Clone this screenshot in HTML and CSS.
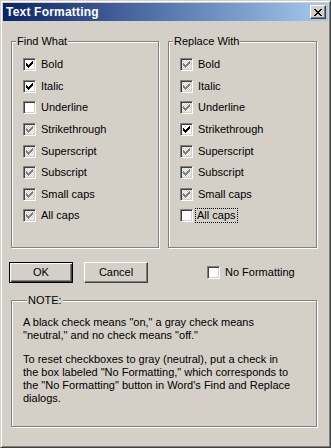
FILE: index.html
```html
<!DOCTYPE html>
<html lang="en">
<head>
  <meta charset="UTF-8">
  <meta name="viewport" content="width=device-width, initial-scale=1.0">
  <title>Text Formatting</title>
  <link rel="stylesheet" href="styles.css">
</head>
<body>
  <div class="dialog">
    <div class="titlebar">
      <span class="title">Text Formatting</span>
      <button class="close-btn" aria-label="Close">
        <svg width="8" height="7" viewBox="0 0 8 7"><path d="M0 0h2v1H0zM6 0h2v1H6zM1 1h2v1H1zM5 1h2v1H5zM2 2h4v1H2zM3 3h2v1H3zM2 4h4v1H2zM1 5h2v1H1zM5 5h2v1H5zM0 6h2v1H0zM6 6h2v1H6z"/></svg>
      </button>
    </div>

    <div class="dialog-body">
      <div class="groups">
        <fieldset class="group">
          <legend>Find What</legend>
          <ul class="options">
            <li class="option"><span class="check on"><svg viewBox="0 0 7 7"><path d="M0 2h1v3H0zM1 3h1v3H1zM2 4h1v3H2zM3 3h1v3H3zM4 2h1v3H4zM5 1h1v3H5zM6 0h1v3H6z"/></svg></span><span class="label">Bold</span></li>
            <li class="option"><span class="check on"><svg viewBox="0 0 7 7"><path d="M0 2h1v3H0zM1 3h1v3H1zM2 4h1v3H2zM3 3h1v3H3zM4 2h1v3H4zM5 1h1v3H5zM6 0h1v3H6z"/></svg></span><span class="label">Italic</span></li>
            <li class="option"><span class="check"></span><span class="label">Underline</span></li>
            <li class="option"><span class="check mixed"><svg viewBox="0 0 7 7"><path d="M0 2h1v3H0zM1 3h1v3H1zM2 4h1v3H2zM3 3h1v3H3zM4 2h1v3H4zM5 1h1v3H5zM6 0h1v3H6z"/></svg></span><span class="label">Strikethrough</span></li>
            <li class="option"><span class="check mixed"><svg viewBox="0 0 7 7"><path d="M0 2h1v3H0zM1 3h1v3H1zM2 4h1v3H2zM3 3h1v3H3zM4 2h1v3H4zM5 1h1v3H5zM6 0h1v3H6z"/></svg></span><span class="label">Superscript</span></li>
            <li class="option"><span class="check mixed"><svg viewBox="0 0 7 7"><path d="M0 2h1v3H0zM1 3h1v3H1zM2 4h1v3H2zM3 3h1v3H3zM4 2h1v3H4zM5 1h1v3H5zM6 0h1v3H6z"/></svg></span><span class="label">Subscript</span></li>
            <li class="option"><span class="check mixed"><svg viewBox="0 0 7 7"><path d="M0 2h1v3H0zM1 3h1v3H1zM2 4h1v3H2zM3 3h1v3H3zM4 2h1v3H4zM5 1h1v3H5zM6 0h1v3H6z"/></svg></span><span class="label">Small caps</span></li>
            <li class="option"><span class="check mixed"><svg viewBox="0 0 7 7"><path d="M0 2h1v3H0zM1 3h1v3H1zM2 4h1v3H2zM3 3h1v3H3zM4 2h1v3H4zM5 1h1v3H5zM6 0h1v3H6z"/></svg></span><span class="label">All caps</span></li>
          </ul>
        </fieldset>

        <fieldset class="group group-right">
          <legend>Replace With</legend>
          <ul class="options">
            <li class="option"><span class="check mixed"><svg viewBox="0 0 7 7"><path d="M0 2h1v3H0zM1 3h1v3H1zM2 4h1v3H2zM3 3h1v3H3zM4 2h1v3H4zM5 1h1v3H5zM6 0h1v3H6z"/></svg></span><span class="label">Bold</span></li>
            <li class="option"><span class="check mixed"><svg viewBox="0 0 7 7"><path d="M0 2h1v3H0zM1 3h1v3H1zM2 4h1v3H2zM3 3h1v3H3zM4 2h1v3H4zM5 1h1v3H5zM6 0h1v3H6z"/></svg></span><span class="label">Italic</span></li>
            <li class="option"><span class="check mixed"><svg viewBox="0 0 7 7"><path d="M0 2h1v3H0zM1 3h1v3H1zM2 4h1v3H2zM3 3h1v3H3zM4 2h1v3H4zM5 1h1v3H5zM6 0h1v3H6z"/></svg></span><span class="label">Underline</span></li>
            <li class="option"><span class="check on"><svg viewBox="0 0 7 7"><path d="M0 2h1v3H0zM1 3h1v3H1zM2 4h1v3H2zM3 3h1v3H3zM4 2h1v3H4zM5 1h1v3H5zM6 0h1v3H6z"/></svg></span><span class="label">Strikethrough</span></li>
            <li class="option"><span class="check mixed"><svg viewBox="0 0 7 7"><path d="M0 2h1v3H0zM1 3h1v3H1zM2 4h1v3H2zM3 3h1v3H3zM4 2h1v3H4zM5 1h1v3H5zM6 0h1v3H6z"/></svg></span><span class="label">Superscript</span></li>
            <li class="option"><span class="check mixed"><svg viewBox="0 0 7 7"><path d="M0 2h1v3H0zM1 3h1v3H1zM2 4h1v3H2zM3 3h1v3H3zM4 2h1v3H4zM5 1h1v3H5zM6 0h1v3H6z"/></svg></span><span class="label">Subscript</span></li>
            <li class="option"><span class="check mixed"><svg viewBox="0 0 7 7"><path d="M0 2h1v3H0zM1 3h1v3H1zM2 4h1v3H2zM3 3h1v3H3zM4 2h1v3H4zM5 1h1v3H5zM6 0h1v3H6z"/></svg></span><span class="label">Small caps</span></li>
            <li class="option"><span class="check"></span><span class="label focused">All caps</span></li>
          </ul>
        </fieldset>
      </div>

      <div class="actions">
        <button class="btn btn-default">OK</button>
        <button class="btn">Cancel</button>
        <div class="option no-format"><span class="check"></span><span class="label">No Formatting</span></div>
      </div>

      <fieldset class="note">
        <legend>NOTE:</legend>
        <p>A black check means "on," a gray check means<br>"neutral," and no check means "off."</p>
        <p>To reset checkboxes to gray (neutral), put a check in<br>the box labeled "No Formatting," which corresponds to<br>the "No Formatting" button in Word's Find and Replace<br>dialogs.</p>
      </fieldset>
    </div>
  </div>
</body>
</html>
```

FILE: styles.css
```css
body {
  margin: 0;
  font-family: "Liberation Sans", Arial, sans-serif;
  font-size: 11px;
  line-height: 13px;
  color: #000;
  background: #d4d0c8;
}

.dialog {
  width: 331px;
  height: 448px;
  box-sizing: border-box;
  background: #d4d0c8;
  border: 1px solid;
  border-color: #d4d0c8 #404040 #404040 #d4d0c8;
  box-shadow: inset 1px 1px #fff, inset -1px -1px #808080;
  padding: 2px;
}

/* title bar */
.titlebar {
  height: 18px;
  display: flex;
  align-items: center;
  justify-content: space-between;
  padding: 0 2px 0 3px;
  background: linear-gradient(to right, #0a246a, #a6caf0);
}

.title {
  color: #fff;
  font-size: 12px;
  font-weight: bold;
  letter-spacing: 0.2px;
}

.close-btn {
  width: 16px;
  height: 14px;
  box-sizing: border-box;
  padding: 0;
  display: flex;
  justify-content: center;
  align-items: center;
  background: #d4d0c8;
  border: 1px solid;
  border-color: #fff #404040 #404040 #fff;
  box-shadow: inset -1px -1px #808080;
}

.close-btn svg {
  display: block;
}

/* body */
.dialog-body {
  padding: 14px 8px 0;
}

.groups {
  display: flex;
  gap: 9px;
}

fieldset {
  margin: 0;
  padding: 0;
  min-width: 0;
  box-sizing: border-box;
  border: 1px solid #808080;
  box-shadow: 1px 1px 0 #fff, inset 1px 1px 0 #fff;
}

legend {
  margin-left: 4px;
  padding: 0 1px;
  background: #d4d0c8;
}

.group {
  width: 148px;
  height: 213px;
}

.group-right {
  width: 149px;
}

.options {
  list-style: none;
  margin: 0;
  padding: 6px 0 0 11px;
}

.option {
  height: 21.6px;
  display: flex;
  align-items: center;
}

/* classic 3d checkbox */
.check {
  width: 13px;
  height: 13px;
  box-sizing: border-box;
  flex-shrink: 0;
  padding: 2px;
  margin-right: 5px;
  background: #fff;
  border: 1px solid;
  border-color: #808080 #fff #fff #808080;
  box-shadow: inset 1px 1px #404040, inset -1px -1px #d4d0c8;
}

.check svg {
  display: block;
  width: 7px;
  height: 7px;
  fill: #000;
  shape-rendering: crispEdges;
}

.check.mixed {
  background: repeating-conic-gradient(#fff 0 25%, #d4d0c8 0 50%) 0 0 / 2px 2px;
}

.check.mixed svg {
  fill: #808080;
}

.label.focused {
  margin-left: -2px;
  padding: 0 1px;
  outline: 1px dotted #000;
}

/* buttons row */
.actions {
  display: flex;
  align-items: center;
  height: 21px;
  margin: 14px 0 0 -2px;
}

.btn {
  width: 64px;
  height: 21px;
  box-sizing: border-box;
  padding: 0;
  margin-right: 11px;
  font: inherit;
  color: #000;
  background: #d4d0c8;
  border: 1px solid;
  border-color: #fff #404040 #404040 #fff;
  box-shadow: inset -1px -1px #808080;
}

.btn-default {
  border: 1px solid #000;
  box-shadow: inset 1px 1px #fff, inset -1px -1px #404040, inset -2px -2px #808080;
}

.no-format {
  margin-left: 48px;
}

/* note */
.note {
  margin-top: 11px;
  width: 306px;
  height: 133px;
  padding: 9px 11px 0;
}

.note p {
  margin: 0 0 11px;
}
```
